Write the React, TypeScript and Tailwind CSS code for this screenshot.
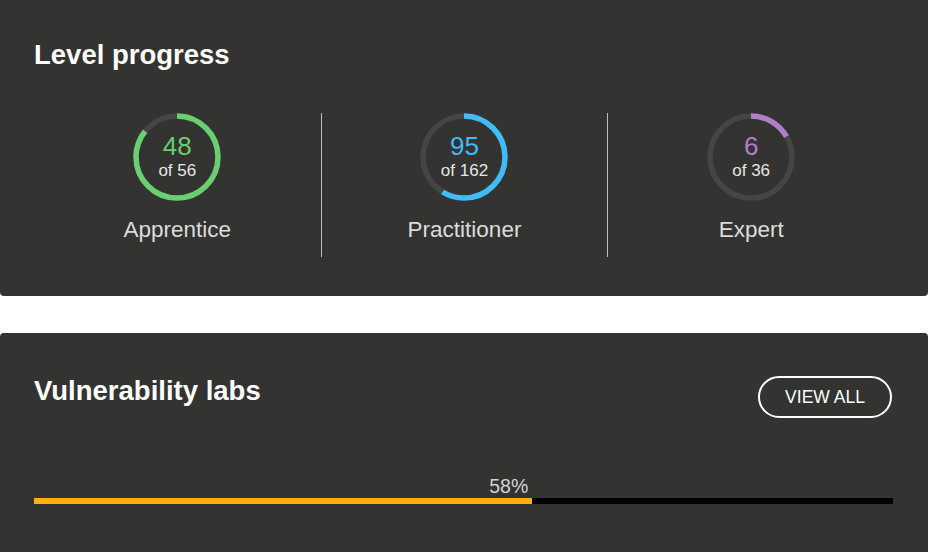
import React from 'react';

interface LevelProps {
  done: number;
  total: number;
  label: string;
  color: string;
}

const Ring: React.FC<LevelProps> = ({ done, total, label, color }) => {
  const r = 41;
  const c = 2 * Math.PI * r;
  const frac = done / total;
  return (
    <div className="flex flex-col items-center">
      <div className="relative w-[88px] h-[88px]">
        <svg width="88" height="88" viewBox="0 0 88 88" className="absolute inset-0">
          <circle cx="44" cy="44" r={r} fill="none" stroke="#454544" strokeWidth="5.5" />
          <circle
            cx="44"
            cy="44"
            r={r}
            fill="none"
            stroke={color}
            strokeWidth="5.5"
            strokeDasharray={`${c * frac} ${c}`}
            transform="rotate(-90 44 44)"
          />
        </svg>
        <div className="absolute inset-0 flex flex-col items-center justify-center">
          <span className="text-[26px] leading-[26px] mb-[1px]" style={{ color }}>
            {done}
          </span>
          <span className="text-[17px] leading-[22px] text-[#e6e6e6]">of {total}</span>
        </div>
      </div>
      <div className="mt-[15px] text-[22.5px] leading-[28px] text-[#dcdcdc]">{label}</div>
    </div>
  );
};

export default function App() {
  const pct = 58;
  return (
    <div className="w-[928px] h-[552px] bg-white overflow-hidden font-['Liberation_Sans',Arial,sans-serif]">
      <div className="bg-[#333332] rounded-b-[4px] h-[296px] px-[34px] pt-[39px]">
        <h2 className="text-[27.5px] leading-[32px] font-bold text-white">Level progress</h2>
        <div className="grid grid-cols-3 mt-[42px]">
          <div className="h-[144px] flex justify-center">
            <Ring done={48} total={56} label="Apprentice" color="#6acf6e" />
          </div>
          <div className="h-[144px] flex justify-center border-l border-[#bdbdbd]">
            <Ring done={95} total={162} label="Practitioner" color="#40bcf8" />
          </div>
          <div className="h-[144px] flex justify-center border-l border-[#bdbdbd]">
            <Ring done={6} total={36} label="Expert" color="#b27dcb" />
          </div>
        </div>
      </div>
      <div className="mt-[37px] bg-[#333332] rounded-t-[4px] h-[219px] pl-[34px] pr-[36px] pt-[43px]">
        <div className="flex items-start justify-between">
          <h2 className="text-[27.5px] leading-[32px] font-bold text-white mt-[-1px]">Vulnerability labs</h2>
          <button className="w-[134px] h-[42px] rounded-full border-2 border-white text-white text-[17.5px] flex items-center justify-center">
            VIEW ALL
          </button>
        </div>
        <div className="mt-[57px] w-[859px]">
          <div className="text-right pr-[4px] text-[19.5px] leading-[22px] text-[#d2d2d2]" style={{ width: `${pct}%` }}>
            {pct}%
          </div>
          <div className="h-[6px] bg-black mt-[1px] flex">
            <div className="h-full bg-[#ffb113]" style={{ width: `${pct}%` }} />
          </div>
        </div>
      </div>
    </div>
  );
}
